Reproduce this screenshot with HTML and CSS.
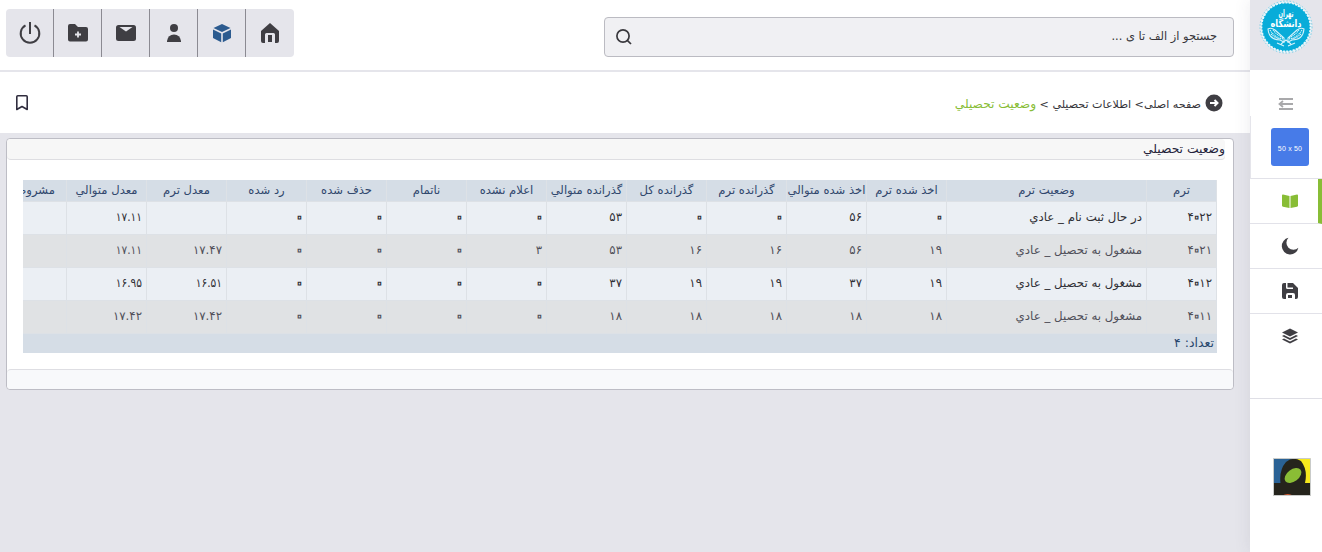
FILE: index.html
```html
<!DOCTYPE html>
<html lang="fa" dir="rtl">
<head>
<meta charset="utf-8">
<title>وضعيت تحصيلي</title>
<link rel="stylesheet" href="styles.css">
</head>
<body>
<aside class="sidebar">
  <div class="brand">
    <svg width="54" height="54" viewBox="0 0 54 54">
      <circle cx="27" cy="27" r="24.5" fill="#08acd9"/>
      <circle cx="27" cy="27" r="24.800" fill="none" stroke="#e9f7fb" stroke-width="2.400" stroke-dasharray="2.200 1.100"/>
      <circle cx="27" cy="27" r="26" fill="none" stroke="#5cc6e4" stroke-width=".8" stroke-dasharray="1.500 1.800"/>
      <g class="brand-text" fill="#fff" text-anchor="middle">
        <text x="27" y="17" font-size="10" textLength="15" lengthAdjust="spacingAndGlyphs">تهران</text>
        <text x="27" y="27" font-size="10" textLength="31" lengthAdjust="spacingAndGlyphs">دانشگاه</text>
      </g>
      <g fill="none" stroke="#d5f2fa" stroke-width="1.1">
        <path d="M9 29q3-2 7 1l9 8v4l-4-2Q10 40 9 29ZM45 29q-3-2-7 1l-9 8v4l4-2Q44 40 45 29Z"/>
        <path stroke-dasharray="1.2 .7" d="M11 30q5 8 13 9M14 30q4 5 10 8M12 34q5 5 10 5M43 30q-5 8-13 9M40 30q-4 5-10 8M42 34q-5 5-10 5"/>
        <path d="M22 44l5-4 5 4M18 43l7 3M36 43l-7 3"/>
      </g>
    </svg>
  </div>
  <div class="collapse">
    <svg width="16" height="12" viewBox="0 0 16 12" fill="none" stroke="#a9a9ab" stroke-width="1.8"><path d="M1 1h14M2 6h13M1 11h14M5 3 1.500 6 5 9"/></svg>
  </div>
  <div class="profile"><span class="avatar">50 x 50</span></div>
  <nav class="menu">
    <a class="menu-item active"><svg width="16" height="14" viewBox="0 0 16 14" fill="#88bd36"><path d="M0 1.500q0-1 1-.9L7.500 2v12L1 12.800q-1-.3-1-1ZM16 1.500q0-1-1-.9L8.500 2v12l6.500-1.200q1-.3 1-1Z"/></svg></a>
    <a class="menu-item"><svg width="18" height="18" viewBox="0 0 18 18" fill="#3f3e43"><path d="M7.500.8A8.400 8.400 0 1 0 17.400 10.800 6.700 6.700 0 0 1 7.500.8Z"/></svg></a>
    <a class="menu-item"><svg width="16" height="16" viewBox="0 0 16 16" fill="#3f3e43"><path d="M2 0h2v4.500Q4 6 5.500 6H11V4.500H5.500V0H11l5 5v9q0 2-2 2h-1v-4q0-2-2-2H6q-2 0-2 2v4H2q-2 0-2-2V2q0-2 2-2ZM6 12h4v3H6Z"/></svg></a>
    <a class="menu-item last"><svg width="16" height="16" viewBox="0 0 16 16" fill="#3f3e43"><path d="m8 .5 8 4-8 4-8-4Z"/><path d="m0 8 2-1 6 3 6-3 2 1-8 4ZM0 11.500l2-1 6 3 6-3 2 1-8 4Z"/></svg></a>
  </nav>
  <div class="partner">
    <svg width="38" height="38" viewBox="0 0 38 38"><path fill="#2a6295" d="M.5.500h20v25H.5Z"/><path fill="#f7e91d" d="M20 .500h17.500v25H20Z"/><path fill="#25241c" d="M.5 25h7Q6 12 13 4 20-2 28 3q7 9 4 22h5.500v12.500H.5Z"/><ellipse cx="20" cy="17.500" rx="9.500" ry="6" fill="#8abd35" transform="rotate(-37 20 17.500)"/><path fill="#d65a30" d="M9 37.500q6-3 11 0Z"/><path fill="none" stroke="#c9cbc9" d="M.5.500h37v37H.5Z"/></svg>
  </div>
</aside>
<main class="main">
  <header class="topbar">
    <div class="search">
      <span class="search-text">جستجو از الف تا ی ...</span>
      <svg width="16" height="16" viewBox="0 0 16 16" fill="none" stroke="#39383d" stroke-width="1.700"><circle cx="7" cy="7" r="6.100"/><path d="m11.300 11.300 3.700 3.700"/></svg>
    </div>
    <div class="toolbar">
      <a class="tool"><svg width="24" height="24" viewBox="0 0 24 24" fill="none" stroke="#3f3e43" stroke-width="2"><path d="M12 1v12M7.500 4.300a9.300 9.300 0 1 0 9 0"/></svg></a>
      <a class="tool"><svg width="24" height="24" viewBox="0 0 24 24" fill="#3f3e43"><path d="M4 3h5l3 3h8q2 0 2 2v10.500q0 2-2 2H4q-2 0-2-2V5q0-2 2-2Z"/><path fill="none" stroke="#e5e5eb" stroke-width="1.800" d="M12 10.500v6M9 13.500h6"/></svg></a>
      <a class="tool"><svg width="24" height="24" viewBox="0 0 24 24" fill="#3f3e43"><rect x="2" y="4" width="20" height="16" rx="2.500"/><path fill="#e5e5eb" d="M5.500 6h13l-6.500 4.500Z"/></svg></a>
      <a class="tool"><svg width="24" height="24" viewBox="0 0 24 24" fill="#3f3e43"><circle cx="12" cy="7" r="4"/><path d="M5 21v-1q1-6.500 7-6.500t7 6.500v1Z"/></svg></a>
      <a class="tool"><svg width="24" height="24" viewBox="0 0 24 24" fill="#2c5b8f"><path d="m12 3 8.500 4-8.500 4-8.500-4ZM3 8.500l8.200 4v8.800L3 17ZM21 8.500l-8.200 4v8.800L21 17Z"/></svg></a>
      <a class="tool"><svg width="24" height="24" viewBox="0 0 24 24" fill="#3f3e43"><path d="m12 2 9 8v10q0 2-2 2h-2v-8.500q0-1.500-1.500-1.500h-7Q7 12 7 13.500V22H5q-2 0-2-2V10ZM10 14h4v7h-4Z"/></svg></a>
    </div>
  </header>
  <div class="crumbbar">
    <div class="crumbs">
      <svg width="18" height="18" viewBox="0 0 18 18"><circle cx="9" cy="9" r="8.500" fill="#3f3e43"/><path d="M5 9h7.500M9.500 6 12.500 9l-3 3" fill="none" stroke="#fff" stroke-width="2"/></svg>
      <span class="crumb-text">صفحه اصلی&gt; اطلاعات تحصيلي &gt; <span class="current">وضعيت تحصيلي</span></span>
    </div>
    <svg width="12" height="16" viewBox="0 0 12 16" fill="none" stroke="#302d3e" stroke-width="1.600"><path d="M.8 1.800q0-1 1-1h8.400q1 0 1 1v12.700L6 11.500.8 14.500Z" stroke-linejoin="round"/></svg>
  </div>
  <section class="panel">
    <div class="panel-head">وضعيت تحصيلي</div>
    <div class="table">
      <div class="row head"><span>ترم</span><span>وضعيت ترم</span><span>اخذ شده ترم</span><span>اخذ شده متوالي</span><span>گذرانده ترم</span><span>گذرانده کل</span><span>گذرانده متوالي</span><span>اعلام نشده</span><span>ناتمام</span><span>حذف شده</span><span>رد شده</span><span>معدل ترم</span><span>معدل متوالي</span><span class="clipped">مشروط ترم</span></div>
      <div class="row"><span>۴<b>۰</b>۲۲</span><span>در حال ثبت نام _ عادي</span><span><b>۰</b></span><span>۵۶</span><span><b>۰</b></span><span><b>۰</b></span><span>۵۳</span><span><b>۰</b></span><span><b>۰</b></span><span><b>۰</b></span><span><b>۰</b></span><span></span><span class="narrow">۱۷.۱۱</span><span></span></div>
      <div class="row alt"><span>۴<b>۰</b>۲۱</span><span>مشغول به تحصيل _ عادي</span><span>۱۹</span><span>۵۶</span><span>۱۶</span><span>۱۶</span><span>۵۳</span><span>۳</span><span><b>۰</b></span><span><b>۰</b></span><span><b>۰</b></span><span>۱۷.۴۷</span><span class="narrow">۱۷.۱۱</span><span></span></div>
      <div class="row"><span>۴<b>۰</b>۱۲</span><span>مشغول به تحصيل _ عادي</span><span>۱۹</span><span>۳۷</span><span>۱۹</span><span>۱۹</span><span>۳۷</span><span><b>۰</b></span><span><b>۰</b></span><span><b>۰</b></span><span><b>۰</b></span><span class="narrow">۱۶.۵۱</span><span class="narrow">۱۶.۹۵</span><span></span></div>
      <div class="row alt"><span>۴<b>۰</b>۱۱</span><span>مشغول به تحصيل _ عادي</span><span>۱۸</span><span>۱۸</span><span>۱۸</span><span>۱۸</span><span>۱۸</span><span><b>۰</b></span><span><b>۰</b></span><span><b>۰</b></span><span><b>۰</b></span><span>۱۷.۴۲</span><span>۱۷.۴۲</span><span></span></div>
      <div class="count">تعداد: ۴</div>
    </div>
    <div class="panel-foot"></div>
  </section>
</main>
</body>
</html>
```
FILE: styles.css
```css
* { box-sizing: border-box; }
body { margin: 0; height: 552px; overflow: hidden; display: flex; background: #e5e5eb; color: #343338; font: 11.5px "DejaVu Sans", sans-serif; white-space: nowrap; }
svg { display: block; flex: none; }
.sidebar { width: 72px; flex: none; height: 552px; display: flex; flex-direction: column; background: #fff; box-shadow: 0 0 16px rgba(60, 60, 90, .1); z-index: 1; }
.brand { height: 70px; background: #e5e5eb; display: flex; justify-content: center; }
.brand-text { font-weight: bold; }
.collapse { height: 46px; display: flex; align-items: center; justify-content: center; padding-top: 22px; }
.profile { height: 63px; border-left: 1px solid #e5e5eb; border-bottom: 1px solid #e2e2e9; display: flex; justify-content: center; padding-top: 12px; }
.avatar { width: 38px; height: 38px; margin-right: -7px; border-radius: 3px; background: #477be8; color: #fff; font: 7px/41px "Liberation Sans", sans-serif; letter-spacing: .2px; text-align: center; direction: ltr; }
.menu { height: 220px; border-bottom: 1px solid #dfdfe6; }
.menu-item { height: 45px; border-bottom: 1px solid #e2e2e9; display: flex; align-items: center; justify-content: center; padding-left: 8px; }
.menu-item.active { border-right: 4px solid #88bd36; padding-left: 12px; }
.menu-item.last { border-bottom: 0; padding-bottom: 1px; }
.partner { padding: 59px 11px 0 0; }
.main { width: 1250px; height: 552px; display: flex; flex-direction: column; }
.topbar { height: 72px; flex: none; background: #fff; border-bottom: 2px solid #e5e5eb; display: flex; justify-content: space-between; padding: 9px 16px 0 6px; }
.search { width: 630px; height: 40px; margin-top: 8px; border: 1px solid #bbbbc2; border-radius: 4px; background: #f0f0f3; display: flex; align-items: center; justify-content: space-between; padding: 0 16px 0 11px; }
.search-text { font-size: 11.4px; padding-bottom: 2px; }
.toolbar { direction: ltr; display: flex; width: 288px; height: 48px; border-radius: 4px; background: #e5e5eb; }
.tool { width: 48px; display: flex; align-items: center; justify-content: center; border-right: 1px solid #8b8a92; }
.tool:last-child { border-right: 0; }
.crumbbar { height: 61px; flex: none; background: #fff; display: flex; align-items: center; justify-content: space-between; padding: 1px 27px 0 16px; }
.crumbs { display: flex; align-items: center; gap: 4px; }
.crumb-text { font-size: 11.1px; padding-top: 1px; }
.current { color: #88bd36; font-size: 12.2px; }
.panel { width: 1228px; height: 252px; margin: 5px 16px 0 0; flex: none; border: 1px solid #bdbdc5; border-radius: 4px; background: #fff; display: flex; flex-direction: column; }
.panel-head { height: 21px; margin-right: 8px; border-bottom: 1px solid #dedee2; border-radius: 4px; background: #f7f7f7; line-height: 20px; font-size: 12.3px; color: #24233a; }
.table { width: 1194px; margin: 20px 16px 16px; overflow: hidden; height: 173px; }
.row { width: 1311px; display: grid; grid-template-columns: 71px 200px repeat(12, 80px); height: 33px; background: #ebeff4; color: #303036; font-size: 11.8px; }
.row span { border-left: 1px solid #dde1e6; border-bottom: 1px solid #dde1e6; padding: 0 4px; line-height: 31px; }
.row span:first-child { border-right: 1px solid #dde1e6; }
.row .narrow { font-family: "DejaVu Sans Condensed", "DejaVu Sans", sans-serif; font-stretch: condensed; }
.row.alt { background: #e0e2e4; color: #50505a; }
/* Persian zero drawn as a small open ring */
.row b { font-weight: normal; font-size: 23px; line-height: 0; margin: 0 -3.5px; vertical-align: -3px; -webkit-text-fill-color: #ebeff4; -webkit-text-stroke: 1.1px #303036; }
.row.alt b { -webkit-text-fill-color: #e0e2e4; -webkit-text-stroke-color: #50505a; }
.row.head { height: 22px; background: #d5dde6; color: #30476d; text-align: center; font-size: 11.6px; }
.row.head span { line-height: 21px; padding: 0; }
.row.head .clipped { padding-right: 3px; }
.count { height: 20px; background: #d5dde6; color: #29476d; line-height: 18px; padding-right: 3px; font-size: 12.5px; }
.panel-foot { height: 20px; border-top: 1px solid #dedee3; border-radius: 4px; background: #f8f9fb; }
```
